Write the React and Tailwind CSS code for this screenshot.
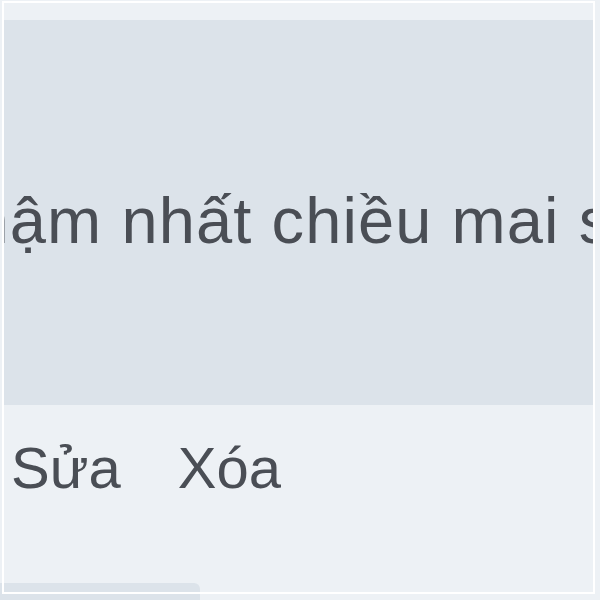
export default function App() {
  return (
    <div className="relative w-[600px] h-[600px] overflow-hidden bg-[#edf1f5] pt-[1px] pl-[2px] font-['Liberation_Sans',Arial,sans-serif] text-[#4a4e55]">
      <div className="absolute left-0 top-[583px] z-0 h-[17px] w-[200px] rounded-tr-[6px] bg-[#dce3ea]" />
      <div className="relative z-10 flex h-[593px] w-[593px] flex-col overflow-hidden border-2 border-white">
        <div className="h-[17px] shrink-0 bg-[#edf1f5]" />
        <div className="h-[385px] shrink-0 overflow-hidden bg-[#dce3ea] pt-[168px]">
          <div className="-ml-[65px] whitespace-nowrap text-[65px] leading-[65px] tracking-[1.1px]">
            chậm nhất chiều mai sẽ xong
          </div>
        </div>
        <div className="flex-1">
          <div className="flex gap-[57px] pl-[7px] pt-[34px] text-[58px] leading-[58px]">
            <span>Sửa</span>
            <span>Xóa</span>
          </div>
        </div>
      </div>
    </div>
  );
}
